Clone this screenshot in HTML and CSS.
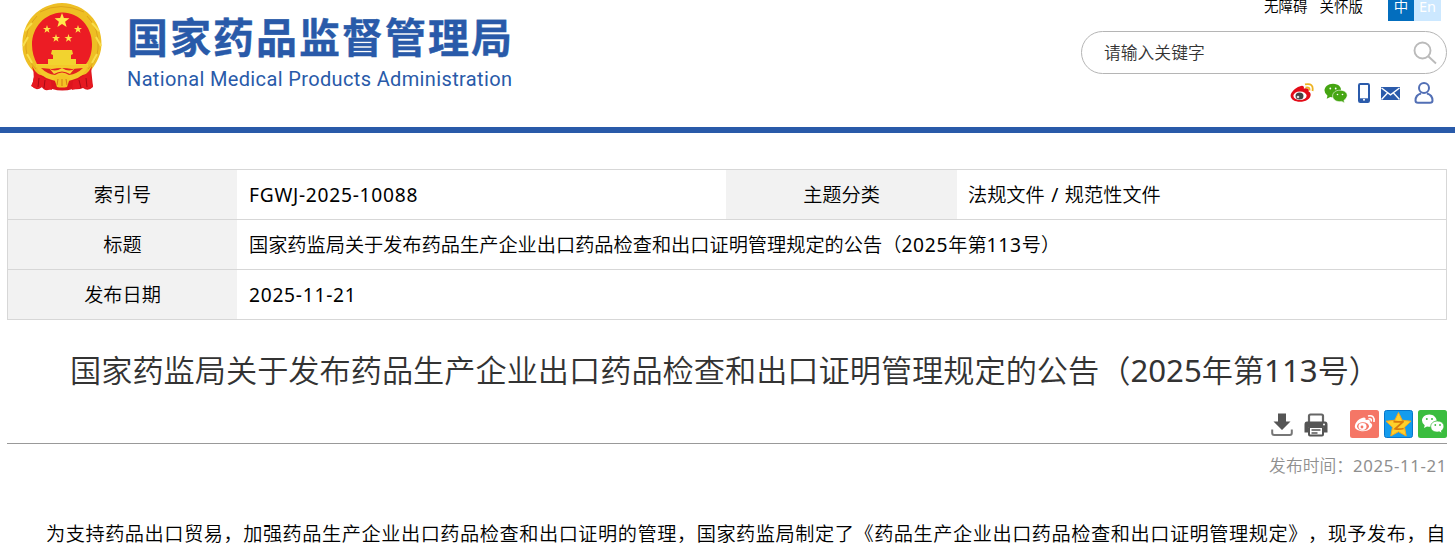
FILE: index.html
```html
<!DOCTYPE html>
<html lang="zh-CN">
<head>
<meta charset="utf-8">
<title>国家药品监督管理局</title>
<link rel="stylesheet" href="styles.css">
</head>
<body>
<header class="header">
  <div class="brand">
    <svg class="emblem" viewBox="0 0 80 88" width="80" height="88">
      <path d="M14 65L69 65L71 84Q66 89 61 85Q57 87 51 86Q40 89 30 86Q22 89 20 84Q14 89 10 83Z" fill="#dd151d"/>
      <path d="M40 0C63 1 80 18 79.500 42C79 55 71 65 67 70C52 76 26 76 13 70C7 64 0 55 .5 42C0 18 17 1 40 0Z" fill="#eebf24"/>
      <path d="M15 13Q2 26 4 46Q5 57 14 66M65 13Q78 26 76 46Q75 57 66 66M18 9Q38-2 62 9" fill="none" stroke="#dda41c" stroke-width="1"/>
      <path d="M10 20L3 28M6 34L1 43M74 34L79 43M70 20L77 28M5 51L10 60M75 51L70 60" stroke="#f9df4d" stroke-width="2"/>
      <path d="M40 9.500C56 9 70 23 70 41C70 49 68 56 64 61L15 61C12 55 10 49 10 42C10 24 23 10 40 9.500Z" fill="#ec1c24"/>
      <path d="M10 63Q14 75 9 83Q15 87 19 84L30 87L29 78Q15 74 10 63ZM70 63Q67 75 71 83Q65 87 61 84L50 87L51 78Q65 74 70 63Z" fill="#e61921"/>
      <path d="M17 75L16 84M23 77L22 85M57 77L59 85M64 75L65 84" stroke="#a60b16"/>
      <path d="M40 10l1.900 5 5.500.2-4.300 3.500 1.500 5.300-4.600-3-4.600 3 1.500-5.300-4.300-3.500 5.500-.2z" fill="#ffe94b"/>
      <g fill="#ffe14a">
        <path id="star" d="M25 22l1 2.900h3l-2.400 1.800.9 3-2.500-1.800-2.500 1.800.9-3L21 24.900h3z"/>
        <use href="#star" x="31"/><use href="#star" x="9" y="9"/><use href="#star" x="21.500" y="9"/>
      </g>
      <path d="M30 47h20l1 4-2 1v4h5v5h12v3H14v-3h12v-5h5v-4l-2-1z" fill="#f2d32f"/>
      <path d="M14 62H66Q63 74 50 77Q40 80 30 77Q17 74 14 62Z" fill="#f4c92a"/>
      <path d="M19 65Q25 71 33 72Q40 67 47 72Q55 71 61 65L50 66Q40 64 30 66Z" fill="#e2231f"/>
      <path d="M27 65Q32 70 40 65Q48 70 53 65L48 71Q40 66 32 71Z" fill="#f7d436"/>
      <path d="M32 75l3 9q5 1 10 0l3-9-8-4z" fill="#f4c424"/>
      <path d="M36 76l-1 6M40 76v7M44 76l1 6" stroke="#d77c15"/>
    </svg>
    <div class="names">
      <div class="name-cn">国家药品监督管理局</div>
      <div class="name-en">National Medical Products Administration</div>
    </div>
  </div>
  <div class="tools">
    <div class="links"><span>无障碍</span><span>关怀版</span><div class="langs"><span class="lang on">中</span><span class="lang">En</span></div></div>
    <div class="search"><span>请输入关键字</span>
      <svg width="24" height="24" viewBox="0 0 24 24" fill="none" stroke="#bababa" stroke-width="1.900"><circle cx="9.500" cy="9.500" r="8"/><path d="M15.500 15.500L23 22.500"/></svg>
    </div>
    <div class="social">
      <svg width="24" height="20" viewBox="0 0 24 20"><path d="M9.500 3.500C13 1.500 14.500 3.500 13.800 5.700C18 4.500 19.500 6 18.500 8.500C22 10 21 14.500 17.500 16.800C11.500 20.500 1 19 .6 12.800C.6 9.500 5.500 4.500 9.500 3.500Z" fill="#e30b17"/><ellipse cx="10" cy="12.700" rx="6.600" ry="4.300" fill="#fff"/><ellipse cx="9.500" cy="13" rx="4" ry="3.600" fill="#444"/><circle cx="8" cy="14" r="1.300" fill="#ddd"/><path d="M15 1.400Q24-.5 22.500 8M15.500 4.600Q20 3.500 19.500 7.500" fill="none" stroke="#edb321" stroke-width="1.800"/></svg>
      <svg width="24" height="20" viewBox="0 0 24 20"><path d="M9 .8C4 .8.5 4 .5 7.500q0 3 3 5.200l-.8 3 3.600-1.700q2 .6 4 .2C18 14 21 1 9 .8Z" fill="#45a512"/><path d="M16 7.200c-4.500 0-7.400 2.600-7.400 5.800 0 4 4.500 6.400 9 5.400l3 1.500-.7-2.500C26 13 23 7.200 16 7.200Z" fill="#45a512" stroke="#fff" stroke-width=".6"/><g fill="#fff"><circle cx="6.300" cy="5.500" r=".9"/><circle cx="11.700" cy="5.500" r=".9"/><circle cx="13.500" cy="11.500" r=".8"/><circle cx="18.500" cy="11.500" r=".8"/></g></svg>
      <svg width="12" height="20" viewBox="0 0 12 20"><rect x="1" y="1" width="10" height="18" rx="1.200" fill="#fff" stroke="#2b5bab" stroke-width="2"/><path d="M1 15.300h10V19H1z" fill="#2b5bab"/><circle cx="6" cy="16.700" r="1" fill="#fff"/></svg>
      <svg width="19" height="13" viewBox="0 0 19 13"><path d="M0 0h19v13H0z" fill="#2b5bab"/><path d="M.5 1L9.500 7.800 18.500 1M.5 12.500L6.500 6M18.500 12.500L12.500 6" fill="none" stroke="#fff" stroke-width="1.400"/></svg>
      <svg width="20" height="22" viewBox="0 0 20 22" fill="none" stroke="#526fb5" stroke-width="2"><circle cx="10" cy="6" r="5"/><path d="M7 11.500Q1.500 13 1.500 18.500Q1.500 20.700 4 20.700H16Q18.500 20.700 18.500 18.500Q18.500 13 13 11.500"/></svg>
    </div>
  </div>
</header>
<main class="main">
  <div class="info">
    <div class="row split"><div class="th">索引号</div><div class="td latin">FGWJ-2025-10088</div><div class="th">主题分类</div><div class="td topic">法规文件 / 规范性文件</div></div>
    <div class="row"><div class="th">标题</div><div class="td">国家药监局关于发布药品生产企业出口药品检查和出口证明管理规定的公告（<span class="latin">2025</span>年第<span class="latin">113</span>号）</div></div>
    <div class="row"><div class="th">发布日期</div><div class="td latin">2025-11-21</div></div>
  </div>
  <h1 class="title">国家药监局关于发布药品生产企业出口药品检查和出口证明管理规定的公告（2025年第113号）</h1>
  <div class="actions">
    <svg class="act" width="22" height="24" viewBox="0 0 22 24"><path d="M7 .5h8v8h4.500L11 17 2.500 8.500H7z" fill="#555"/><path d="M1.200 16.500v3.500q0 2 2 2h15.600q2 0 2-2v-3.500" fill="none" stroke="#777" stroke-width="2"/></svg>
    <svg class="act print" width="24" height="24" viewBox="0 0 24 24"><path d="M5 9V3Q5 1.500 6.500 1.500h11Q19 1.500 19 3v6" fill="none" stroke="#666" stroke-width="2.200"/><path d="M3 8.500h18q2.500 0 2.500 3v8H20v-5H4v5H.5v-8Q.5 8.500 3 8.500z" fill="#555"/><rect x="5" y="14" width="14" height="8.500" rx="1" fill="#fff" stroke="#555" stroke-width="2"/><path d="M7.500 17h9M7.500 20h6" stroke="#555" stroke-width="1.400"/><circle cx="20" cy="11.500" r="1" fill="#fff"/></svg>
    <svg width="29" height="28" viewBox="0 0 29 28"><rect width="29" height="28" rx="2.500" fill="#f57666"/><path d="M12 8Q16 6.500 15.700 10Q21 9 19.700 12.300Q24 14.500 21 18Q17 22 10.500 21Q3.500 19.500 5 15Q7 9.500 12 8Z" fill="#fff"/><ellipse cx="13" cy="16.300" rx="6" ry="4" fill="#f57666"/><ellipse cx="12.500" cy="16.500" rx="4" ry="3.400" fill="#fff"/><circle cx="12" cy="17" r="1.400" fill="#f57666"/><path d="M18 6Q25 4.500 24 12M18.500 9Q22 8 21.200 11.500" fill="none" stroke="#fff" stroke-width="1.600"/></svg>
    <svg width="29" height="28" viewBox="0 0 29 28"><rect x=".5" y=".5" width="28" height="27" rx="2" fill="#149ced" stroke="#0876ca"/><path d="M14.500 2.500l3.700 7.700 8.800 1-6.500 6 1.700 8.800-7.700-4.300L6.800 26l1.700-8.800L2 11.200l8.800-1z" fill="#ffd02b" stroke="#f7a81b"/><path d="M9.500 11.500q5 1 10-.2l-8.300 7.500q4 .8 8.500-.3" fill="none" stroke="#d97a0c" stroke-width="1.800"/></svg>
    <svg width="29" height="28" viewBox="0 0 29 28"><rect width="29" height="28" rx="2.500" fill="#3bbd3f"/><path d="M11.300 4.500C7 4.500 4 7.300 4 10.500q0 3 2.700 4.800l-.7 2.600 3-1.500q9 1.500 9.700-5.300C18.700 7.400 15.500 4.500 11.300 4.500Z" fill="#fff"/><path d="M19.500 11c-4 0-6.800 2.400-6.800 5.700 0 4 4.500 6.200 8.500 5.100l2.800 1.500-.7-2.300C28.500 17 25.500 11 19.500 11Z" fill="#fff" stroke="#3bbd3f" stroke-width=".8"/><g fill="#3bbd3f"><circle cx="8.800" cy="9" r="1"/><circle cx="14" cy="9" r="1"/><circle cx="17.300" cy="15" r=".9"/><circle cx="22" cy="15" r=".9"/></g></svg>
  </div>
  <div class="date">发布时间：<span class="latin">2025-11-21</span></div>
  <p class="body">为支持药品出口贸易，加强药品生产企业出口药品检查和出口证明的管理，国家药监局制定了《药品生产企业出口药品检查和出口证明管理规定》，现予发布，自</p>
</main>
</body>
</html>
```
FILE: styles.css
```css
* { box-sizing: border-box; }
body {
  margin: 0;
  width: 1455px;
  height: 558px;
  overflow: hidden;
  background: #fff;
  color: #000;
  font-family: "Noto Sans", "Noto Sans CJK SC DemiLight", "Noto Sans CJK SC", sans-serif;
  text-spacing-trim: space-all;
  white-space: nowrap;
}
svg { display: block; flex: none; }
.latin { letter-spacing: .038em; }

.header {
  display: flex;
  justify-content: space-between;
  height: 133px;
  border-bottom: 6px solid #295aa9;
}
.brand { display: flex; padding: 3px 0 0 22px; }
.names { margin-left: 25px; padding-top: 7px; color: #295aa9; }
.name-cn {
  font: 700 41px/50px "Noto Sans CJK SC", sans-serif;
  letter-spacing: 2px;
  -webkit-text-stroke: .4px #295aa9;
}
.name-en {
  margin-top: 6px;
  font: 400 20px/26px Roboto, sans-serif;
  letter-spacing: .36px;
}

.tools { width: 374px; padding-right: 8px; }
.links {
  display: flex;
  justify-content: flex-end;
  height: 21px;
  padding-right: 6px;
  font-size: 14.500px;
  line-height: 13px;
}
.links > span { margin-right: 12px; }
.langs { display: flex; margin-left: 13px; }
.lang {
  width: 27px;
  height: 21px;
  background: #cce8ff;
  color: #fff;
  text-align: center;
  line-height: 13px;
}
.lang.on { width: 26px; background: #036ebe; }
.search {
  display: flex;
  justify-content: space-between;
  width: 366px;
  height: 43px;
  margin-top: 10px;
  padding: 9px 9px 0 22px;
  border: 1px solid #b5b5b5;
  border-radius: 22px;
  color: #333;
  font-size: 16.800px;
  line-height: 24px;
}
.social {
  display: flex;
  align-items: center;
  justify-content: flex-end;
  height: 22px;
  margin-top: 8px;
  padding-right: 13px;
}
.social svg:nth-child(2) { margin-left: 10px; }
.social svg:nth-child(3) { margin-left: 10px; }
.social svg:nth-child(4) { margin-left: 11px; }
.social svg:nth-child(5) { margin-left: 14px; }

.main { padding: 36px 8px 0 7px; }
.info { border: 1px solid #d7d7d7; border-bottom: 0; }
.row {
  display: grid;
  grid-template-columns: 229px 1fr;
  grid-template-rows: 49px;
  height: 50px;
  border-bottom: 1px solid #d7d7d7;
  font-size: 19.200px;
  line-height: 50px;
}
.split { grid-template-columns: 229px 489px 231px 1fr; }
.th { background: #f2f2f2; text-align: center; }
.td { padding-left: 12px; }
.topic { padding-left: 11px; word-spacing: 1.5px; }

.title {
  margin: 26px 0 0;
  padding-left: 63px;
  color: #333;
  font-size: 31.200px;
  font-weight: 400;
  line-height: 48px;
}
.actions {
  display: flex;
  justify-content: flex-end;
  gap: 5px;
  height: 50px;
  padding-top: 16px;
  border-bottom: 1px solid #999;
}
.act { margin-top: 3px; margin-right: 6px; }
.print { margin-right: 17px; }
.date {
  color: #8f8f8f;
  font-size: 16.800px;
  line-height: 24px;
  margin-top: 10px;
  text-align: right;
}
.body {
  margin: 41px 0 0;
  padding-left: 39px;
  font-size: 19.200px;
  line-height: 30px;
  letter-spacing: .53px;
}
```
